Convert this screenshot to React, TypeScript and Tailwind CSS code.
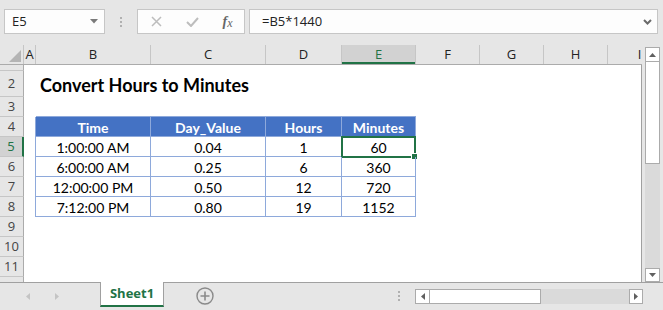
import React from "react";

const UI = { fontFamily: '"Open Sans", "Noto Sans", sans-serif' };
const CELL = { fontFamily: 'Lato, "Open Sans", sans-serif' };

type Col = { l: string; w: string; sel?: boolean };
const cols: Col[] = [
  { l: "A", w: "w-[12px]" },
  { l: "B", w: "w-[115px]" },
  { l: "C", w: "w-[115px]" },
  { l: "D", w: "w-[76px]" },
  { l: "E", w: "w-[74px]", sel: true },
  { l: "F", w: "w-[64px]" },
  { l: "G", w: "w-[64px]" },
  { l: "H", w: "w-[64px]" },
  { l: "I", w: "w-[64px]" },
];

const tableCols = ["w-[115px]", "w-[115px]", "w-[76px]", "w-[74px]"];

const data = [
  ["1:00:00 AM", "0.04", "1", "60"],
  ["6:00:00 AM", "0.25", "6", "360"],
  ["12:00:00 PM", "0.50", "12", "720"],
  ["7:12:00 PM", "0.80", "19", "1152"],
];

function RowHead({ n, sel }: { n: string; sel?: boolean }) {
  return (
    <div
      style={UI}
      className={`w-[24px] shrink-0 border-b border-b-[#c6c6c6] flex items-center justify-center text-[13px] ${
        sel
          ? "bg-[#d2d2d2] border-r-2 border-r-[#217346] text-[#217346]"
          : "bg-[#e6e6e6] border-r border-r-[#ababab] text-[#444]"
      }`}
    >
      {n}
    </div>
  );
}

function Row({
  n,
  sel,
  h = "h-[20px]",
  children,
}: {
  n: string;
  sel?: boolean;
  h?: string;
  children?: React.ReactNode;
}) {
  return (
    <div className={`flex ${h}`}>
      <RowHead n={n} sel={sel} />
      <div className="flex flex-1 min-w-0 bg-white">{children}</div>
    </div>
  );
}

export default function App() {
  return (
    <div className="w-[663px] h-[310px] bg-[#e6e6e6] overflow-hidden flex flex-col select-none">
      {/* Top toolbar */}
      <div className="h-[45px] shrink-0 flex items-start pt-[9px] pl-[4px]" style={UI}>
        <div className="w-[101px] h-[25px] bg-[#fdfdfd] border border-[#c6c6c6] flex items-center pl-[7px] pr-[6px] text-[13px] text-[#222]">
          <span className="flex-1">E5</span>
          <svg width="8" height="5" viewBox="0 0 8 5">
            <path d="M0 0 H8 L4 4.5 Z" fill="#7a7a7a" />
          </svg>
        </div>
        <div className="w-[32px] h-[25px] flex flex-col items-center justify-center gap-[2px]">
          <div className="w-[2px] h-[2px] bg-[#b0b0b0]" />
          <div className="w-[2px] h-[2px] bg-[#b0b0b0]" />
          <div className="w-[2px] h-[2px] bg-[#b0b0b0]" />
        </div>
        <div className="w-[108px] h-[25px] bg-[#fdfdfd] border border-[#c6c6c6] flex items-center">
          <div className="w-[36px] flex justify-center">
            <svg width="11" height="11" viewBox="0 0 11 11">
              <path d="M1 1 L10 10 M10 1 L1 10" stroke="#bdbdbd" strokeWidth="1.5" />
            </svg>
          </div>
          <div className="w-[37px] flex justify-center">
            <svg width="13" height="10" viewBox="0 0 13 10">
              <path d="M1 5 L5 9 L12 1" stroke="#bdbdbd" strokeWidth="2" fill="none" />
            </svg>
          </div>
          <div
            className="w-[33px] flex justify-center text-[14px] italic text-[#666]"
            style={{ fontFamily: '"Liberation Serif", serif' }}
          >
            <span className="font-bold">f</span>
            <span className="text-[12px] mt-[3px]">x</span>
          </div>
        </div>
        <div className="ml-[4px] w-[409px] h-[25px] bg-[#fdfdfd] border border-[#c6c6c6] flex items-center pl-[12px] pr-[5px] text-[13px] text-[#222]">
          <span className="flex-1">=B5*1440</span>
          <svg width="9" height="6" viewBox="0 0 9 6">
            <path d="M1 1 L4.5 4.5 L8 1" stroke="#6a6a6a" strokeWidth="2" fill="none" />
          </svg>
        </div>
      </div>

      {/* Grid + vertical scrollbar */}
      <div className="flex h-[237px] shrink-0">
        <div className="w-[642px] shrink-0 flex flex-col overflow-hidden">
          {/* column header */}
          <div className="flex h-[20px] shrink-0 border-b border-[#ababab]" style={UI}>
            <div className="w-[24px] shrink-0 border-r border-[#c6c6c6] flex items-end justify-end pr-[2px] pb-[2px]">
              <svg width="12" height="12" viewBox="0 0 12 12">
                <path d="M12 0 L12 12 L0 12 Z" fill="#b4b4b4" />
              </svg>
            </div>
            {cols.map((c) => (
              <div
                key={c.l}
                className={`${c.w} shrink-0 flex items-center justify-center text-[13px] border-r border-[#c6c6c6] ${
                  c.sel ? "bg-[#d2d2d2] text-[#217346] shadow-[inset_0_-2px_0_#217346]" : "text-[#222]"
                }`}
              >
                {c.l}
              </div>
            ))}
          </div>

          {/* body */}
          <div className="flex-1 flex flex-col border-r border-[#a0a0a0]" style={CELL}>
            {/* row 1 partial */}
            <div className="flex h-[6px] overflow-hidden">
              <div className="w-[24px] shrink-0 bg-[#e6e6e6] border-r border-b border-r-[#ababab] border-b-[#c6c6c6] overflow-hidden">
                <div style={UI} className="h-[20px] -mt-[15px] flex items-center justify-center text-[13px] text-[#444]">
                  1
                </div>
              </div>
              <div className="flex-1 bg-white" />
            </div>

            {/* row 2 title */}
            <Row n="2" h="h-[26px]">
              <div className="pl-[16px] pt-[3px] flex items-center whitespace-nowrap text-[18px] font-bold text-black">
                Convert Hours to Minutes
              </div>
            </Row>

            {/* row 3 */}
            <Row n="3">
              <div className="w-[12px] shrink-0" />
              <div className="w-[380px] shrink-0 border-b border-[#8ea9db]" />
            </Row>

            {/* row 4 header */}
            <Row n="4">
              <div className="w-[12px] shrink-0 border-r border-[#8ea9db]" />
              {["Time", "Day_Value", "Hours", "Minutes"].map((t, i) => (
                <div
                  key={t}
                  className={`${tableCols[i]} shrink-0 bg-[#4472c4] border-r border-b border-[#8ea9db] flex items-center justify-center text-[14px] font-bold text-white pt-[1px]`}
                >
                  {t}
                </div>
              ))}
            </Row>

            {data.map((r, ri) => (
              <Row key={ri} n={String(5 + ri)} sel={ri === 0}>
                <div className="w-[12px] shrink-0 border-r border-[#8ea9db]" />
                {r.map((v, i) => (
                  <div
                    key={i}
                    className={`${tableCols[i]} shrink-0 relative border-r border-b border-[#8ea9db] flex items-center justify-center text-[14px] text-black pt-[1px]`}
                  >
                    {v}
                    {ri === 0 && i === 3 && (
                      <div className="absolute -left-[1px] -top-[1px] w-[75px] h-[22px] border-2 border-[#217346]">
                        <div className="absolute -right-[3px] -bottom-[3px] w-[5px] h-[5px] bg-[#217346] outline outline-1 outline-white" />
                      </div>
                    )}
                  </div>
                ))}
              </Row>
            ))}

            <Row n="9" />
            <Row n="10" />
            <Row n="11" />
            <div className="flex h-[5px]">
              <div className="w-[24px] shrink-0 bg-[#e6e6e6] border-r border-[#ababab]" />
              <div className="flex-1 bg-white" />
            </div>
          </div>
        </div>

        {/* vertical scrollbar */}
        <div className="w-[21px] shrink-0 flex flex-col pl-[3px] pt-[2px]">
          <div className="w-[15px] h-[15px] bg-white border border-[#ababab] flex items-center justify-center">
            <svg width="7" height="4" viewBox="0 0 7 4">
              <path d="M0 4 L3.5 0 L7 4 Z" fill="#606060" />
            </svg>
          </div>
          <div className="w-[15px] h-[102px] bg-white border border-t-0 border-[#ababab]" />
          <div className="w-[15px] flex-1 bg-[#dadada]" />
          <div className="w-[15px] h-[14px] bg-white border border-[#ababab] flex items-center justify-center">
            <svg width="7" height="4" viewBox="0 0 7 4">
              <path d="M0 0 L7 0 L3.5 4 Z" fill="#606060" />
            </svg>
          </div>
        </div>
      </div>

      {/* bottom bar */}
      <div className="h-[28px] shrink-0 border-t border-[#a0a0a0] flex items-start">
        <div className="w-[100px] shrink-0 h-[26px] flex items-center">
          <div className="w-[30px] flex justify-end">
            <svg width="4" height="7" viewBox="0 0 4 7">
              <path d="M4 0 L0 3.5 L4 7 Z" fill="#c4c4c4" />
            </svg>
          </div>
          <div className="w-[29px] flex justify-end">
            <svg width="4" height="7" viewBox="0 0 4 7">
              <path d="M0 0 L4 3.5 L0 7 Z" fill="#c4c4c4" />
            </svg>
          </div>
        </div>
        <div
          className="w-[64px] shrink-0 h-[25px] -mt-px bg-white border-l border-r border-[#a0a0a0] border-b-2 border-b-[#217346] flex items-center justify-center text-[13px] font-bold text-[#217346]"
          style={UI}
        >
          Sheet1
        </div>
        <div className="w-[50px] shrink-0 h-[26px] flex items-center justify-end">
          <svg width="18" height="18" viewBox="0 0 18 18">
            <circle cx="9" cy="9" r="8" stroke="#8a8a8a" strokeWidth="1.4" fill="none" />
            <path d="M9 4.5 V13.5 M4.5 9 H13.5" stroke="#8a8a8a" strokeWidth="1.6" />
          </svg>
        </div>
        <div className="w-[201px] shrink-0 h-[26px] flex items-center justify-end pr-[15px]">
          <div className="flex flex-col gap-[2px]">
            <div className="w-[2px] h-[2px] bg-[#b0b0b0]" />
            <div className="w-[2px] h-[2px] bg-[#b0b0b0]" />
            <div className="w-[2px] h-[2px] bg-[#b0b0b0]" />
          </div>
        </div>
        <div className="flex h-[15px] mt-[6px]">
          <div className="w-[15px] h-[15px] bg-white border border-[#ababab] flex items-center justify-center">
            <svg width="4" height="7" viewBox="0 0 4 7">
              <path d="M4 0 L0 3.5 L4 7 Z" fill="#606060" />
            </svg>
          </div>
          <div className="w-[111px] h-[15px] bg-white border border-l-0 border-[#ababab]" />
          <div className="w-[88px] h-[15px] bg-[#dadada]" />
          <div className="w-[14px] h-[15px] bg-white border border-[#ababab] flex items-center justify-center">
            <svg width="4" height="7" viewBox="0 0 4 7">
              <path d="M0 0 L4 3.5 L0 7 Z" fill="#606060" />
            </svg>
          </div>
        </div>
      </div>
    </div>
  );
}
